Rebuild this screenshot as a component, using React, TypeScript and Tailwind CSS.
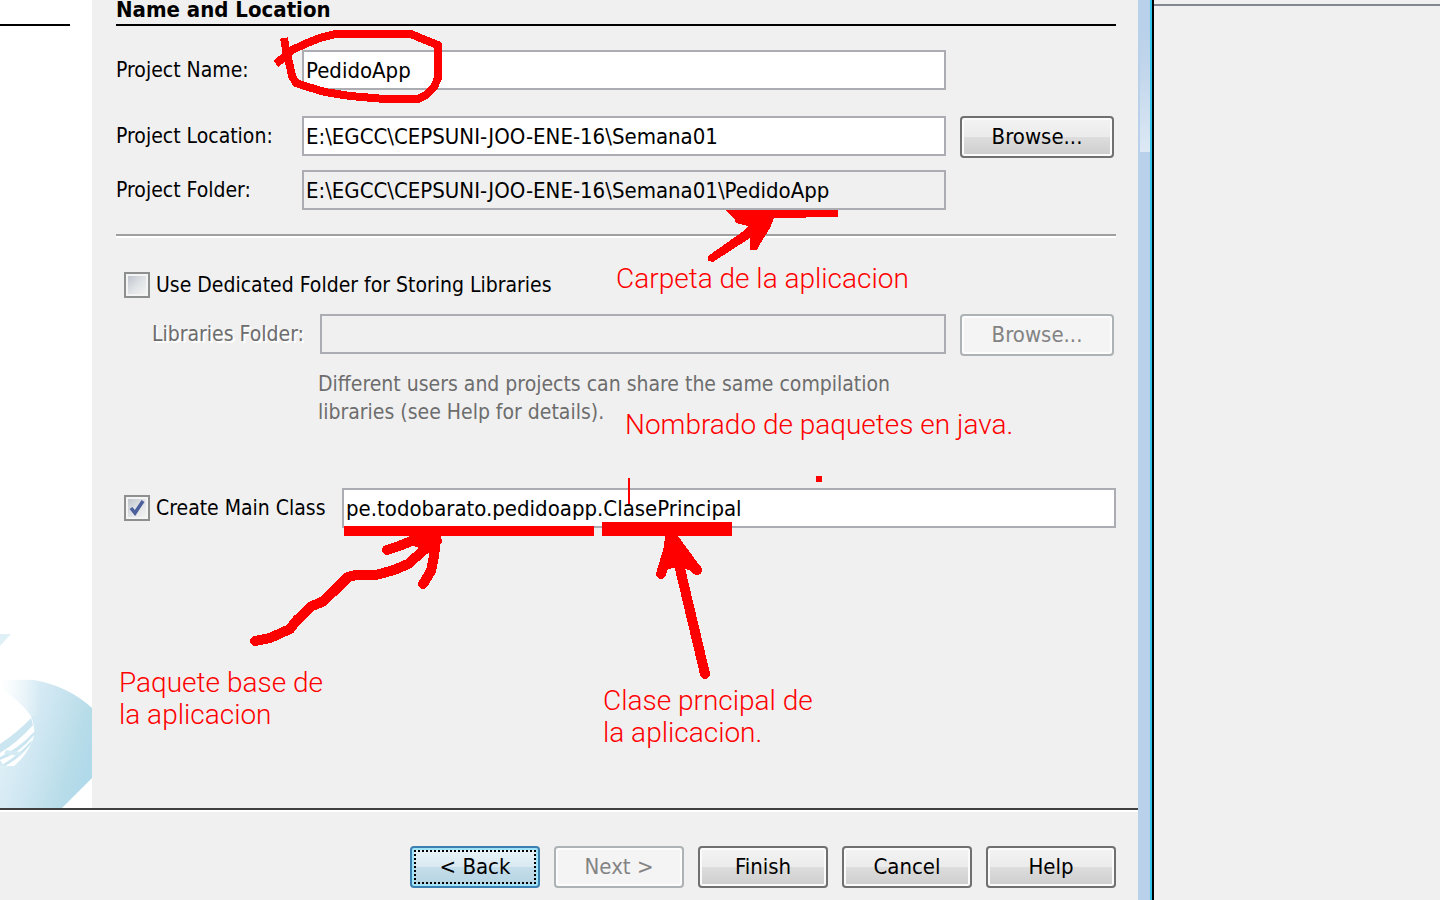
import type { ButtonHTMLAttributes, InputHTMLAttributes, ReactNode } from "react";
import clsx from "clsx";

const fieldBase =
  "h-10 w-full min-w-0 border-2 border-[#abadb3] px-0.5 text-[22px] leading-7 outline-none rounded-none";

function Field({ className, ...rest }: InputHTMLAttributes<HTMLInputElement>) {
  return <input type="text" className={clsx(fieldBase, className)} {...rest} />;
}

type Tone = "normal" | "focused" | "disabled";

function PushButton({
  tone = "normal",
  className,
  children,
  ...rest
}: ButtonHTMLAttributes<HTMLButtonElement> & { tone?: Tone }) {
  return (
    <button
      type="button"
      disabled={tone === "disabled"}
      className={clsx(
        "relative h-[42px] shrink-0 rounded-[4px] border-2 text-center text-[22px] leading-7",
        tone === "normal" &&
          "border-[#707070] bg-[linear-gradient(#f3f3f3,#ebebeb_50%,#dddddd_50%,#cdcdcd)] shadow-[inset_0_0_0_2px_#fbfbfb]",
        tone === "focused" &&
          "border-[#3c7fb1] bg-[linear-gradient(#eaf4f9,#d9e9f1_50%,#c5deea_50%,#b4d3e2)] shadow-[inset_0_0_0_2px_#9fe4f8]",
        tone === "disabled" &&
          "border-[#adb2b5] bg-[#f4f4f4] text-[#838383] shadow-[inset_0_0_0_2px_#fcfcfc]",
        className,
      )}
      {...rest}
    >
      {tone === "focused" && (
        <span className="absolute inset-0.5 border-2 border-dotted border-black" />
      )}
      {children}
    </button>
  );
}

function Tick({ id, checked }: { id: string; checked?: boolean }) {
  return (
    <span className="relative h-[26px] w-[26px] shrink-0">
      <input
        id={id}
        type="checkbox"
        defaultChecked={checked}
        className="peer block h-[26px] w-[26px] appearance-none border-2 border-[#8e8f8f] bg-[linear-gradient(135deg,#b8bec8,#dfe2e5_50%,#f6f6f6)] shadow-[inset_0_0_0_2px_#f4f4f4]"
      />
      <svg
        viewBox="0 0 26 26"
        className="pointer-events-none absolute inset-0 hidden h-full w-full peer-checked:block"
        aria-hidden="true"
      >
        <path d="M7 13 L11 18 L19 6" fill="none" stroke="#4b5f9b" strokeWidth="3.5" />
      </svg>
    </span>
  );
}

function Note({ className, children }: { className: string; children: ReactNode }) {
  return (
    <p
      className={clsx(
        "absolute whitespace-nowrap font-['Roboto','Liberation_Sans',sans-serif] text-[28px] font-light leading-8 text-[#ff0000]",
        className,
      )}
    >
      {children}
    </p>
  );
}

function Swoosh() {
  return (
    <svg viewBox="0 0 92 176" className="h-44 w-full" aria-hidden="true">
      <defs>
        <linearGradient id="band" x1="0" y1="0.2" x2="1" y2="0.6">
          <stop offset="0" stopColor="#e6f3f8" />
          <stop offset="0.45" stopColor="#cfe7f2" />
          <stop offset="0.8" stopColor="#b9dde9" />
          <stop offset="1" stopColor="#b0d9ea" />
        </linearGradient>
        <linearGradient id="crest" x1="0" y1="0" x2="1" y2="0">
          <stop offset="0" stopColor="#ffffff" />
          <stop offset="1" stopColor="#ffffff" stopOpacity="0" />
        </linearGradient>
      </defs>
      <path d="M0 2 H11 L0 14 Z" fill="#e0f0f7" />
      <path d="M0 49 Q20 47 34 48 Q68 54 92 76 V146 L62 176 H0 Z" fill="url(#band)" />
      <path d="M0 47 H40 V84 H0 Z" fill="url(#crest)" />
      <path d="M0 57 Q20 68 31 84 Q37 98 32 110 Q26 124 14 134 H0 Z" fill="#ffffff" />
      <path d="M0 112 Q18 100 31 86 L33 93 Q18 110 0 121 Z" fill="#cbe6f1" />
      <path d="M0 125 Q18 117 34 100 L34 103 Q20 121 0 128 Z" fill="#cbe6f1" />
      <path d="M2 133 Q20 122 32 108 L31 112 Q20 126 5 134 Z" fill="#cbe6f1" />
      <path d="M6 118 L22 120 L20 124 L4 122 Z" fill="#d5ebf4" />
      <path d="M0 128 L4 134 H0 Z" fill="#d5ebf4" />
    </svg>
  );
}

function Ink() {
  return (
    <svg
      viewBox="0 0 1138 900"
      width="1138"
      height="900"
      className="absolute left-0 top-0"
      shapeRendering="crispEdges"
      fill="none"
      stroke="#ff0000"
      strokeWidth="8"
      strokeLinejoin="round"
      aria-hidden="true"
    >
      <path d="M276 64 L292 50 L305 44 L320 38 L335 34 H411 L425 40 L438 45 V78 L434 87 L426 95 L418 99 H385 L350 96 L325 92 L308 87 L296 83 L292 76 L289 62 L286 50 L284 38" />
      <path
        d="M725 210 H838 V217 L774 218 L770 228 L760 244 L757 250 H750 V238 L713 262 L708 261 V256 L745 230 L748 226 L736 223 L734 218 Z"
        fill="#ff0000"
        stroke="none"
      />
      <path
        d="M255 641 L270 638 L290 629 L297 620 L312 606 L322 602 L333 592 L348 577 L356 575 H376 L394 570 L408 564 L424 550 L437 541"
        strokeWidth="10"
        strokeLinecap="round"
      />
      <path
        d="M387 550 L399 546 L414 540 L436 538 L434 556 L431 571 L423 584 M414 541 L430 546"
        strokeWidth="10"
        strokeLinecap="round"
      />
      <g fill="#ff0000" stroke="none">
        <rect x="344" y="526" width="250" height="10" />
        <rect x="602" y="522" width="130" height="14" />
        <rect x="628" y="478" width="2" height="26" />
        <rect x="816" y="476" width="6" height="6" />
        <path d="M665 536 H678 L700 566 L688 570 L681 567 L674 568 L668 569 L662 566 Z" />
      </g>
      <path
        d="M705 674 L677 556 L671 541 L661 574 M673 541 L686 559 L697 570"
        strokeWidth="10"
        strokeLinecap="round"
      />
    </svg>
  );
}

export default function App() {
  return (
    <div className="flex min-h-screen bg-[#f0f0f0] font-['DejaVu_Sans_Condensed','DejaVu_Sans',sans-serif] text-[21px] leading-7 text-black">
      <div className="relative flex min-w-0 flex-1 flex-col">
        <div className="flex flex-1">
          <aside className="flex w-[92px] shrink-0 flex-col justify-between bg-white">
            <div className="mt-6 mr-[22px] h-0.5 bg-black" />
            <Swoosh />
          </aside>

          <main className="min-w-0 flex-1 pr-[22px] pl-6">
            <h1 className="h-[26px] border-b-2 border-black text-[22px] leading-5 font-bold">
              Name and Location
            </h1>

            <form id="project" className="pt-6">
              <div className="grid grid-cols-[186px_minmax(0,1fr)_170px] items-center">
                <label htmlFor="name">Project Name:</label>
                <Field id="name" defaultValue="PedidoApp" className="bg-white" />
              </div>

              <div className="mt-[26px] grid grid-cols-[186px_minmax(0,1fr)_170px] items-start">
                <label htmlFor="location" className="pt-1.5">
                  Project Location:
                </label>
                <Field
                  id="location"
                  defaultValue="E:\EGCC\CEPSUNI-JOO-ENE-16\Semana01"
                  className="bg-white"
                />
                <PushButton className="mr-0.5 ml-3.5">Browse...</PushButton>
              </div>

              <div className="mt-3 grid grid-cols-[186px_minmax(0,1fr)_170px] items-center">
                <label htmlFor="folder">Project Folder:</label>
                <Field
                  id="folder"
                  readOnly
                  defaultValue="E:\EGCC\CEPSUNI-JOO-ENE-16\Semana01\PedidoApp"
                  className="bg-[#f0f0f0]"
                />
              </div>

              <div className="mt-6 h-1 border-t-2 border-[#a0a0a0] bg-white" />

              <div className="mt-[33px] flex items-center gap-1.5 pl-2">
                <Tick id="dedicated" />
                <label htmlFor="dedicated">Use Dedicated Folder for Storing Libraries</label>
              </div>

              <div className="mt-[15px] grid grid-cols-[204px_minmax(0,1fr)_170px] items-start">
                <label
                  htmlFor="libraries"
                  className="pt-1.5 pl-9 text-[#6d6d6d] [text-shadow:2px_2px_0_#fff]"
                >
                  Libraries Folder:
                </label>
                <Field id="libraries" disabled className="bg-[#f0f0f0]" />
                <PushButton tone="disabled" className="mr-0.5 ml-3.5">
                  Browse...
                </PushButton>
              </div>

              <p className="mt-3.5 ml-[202px] max-w-[600px] text-[#6d6d6d]">
                Different users and projects can share the same compilation
                <br />
                libraries (see Help for details).
              </p>

              <div className="mt-[62px] flex items-center pl-2">
                <Tick id="create" checked />
                <label htmlFor="create" className="w-48 shrink-0 pl-1.5">
                  Create Main Class
                </label>
                <Field
                  aria-label="Main class name"
                  defaultValue="pe.todobarato.pedidoapp.ClasePrincipal"
                  className="bg-white"
                />
              </div>
            </form>
          </main>
        </div>

        <footer className="flex h-[92px] shrink-0 items-start justify-end gap-3.5 border-t-2 border-[#404040] pt-9 pr-[22px] shadow-[inset_0_2px_0_#fff]">
          <PushButton tone="focused" className="w-[130px]">
            &lt; Back
          </PushButton>
          <PushButton tone="disabled" className="w-[130px]">
            Next &gt;
          </PushButton>
          <PushButton className="w-[130px]">Finish</PushButton>
          <PushButton className="w-[130px]">Cancel</PushButton>
          <PushButton className="w-[130px]">Help</PushButton>
        </footer>

        <div className="pointer-events-none absolute inset-0">
          <Ink />
          <Note className="top-[263px] left-[616px]">Carpeta de la aplicacion</Note>
          <Note className="top-[409px] left-[625px]">Nombrado de paquetes en java.</Note>
          <Note className="top-[667px] left-[119px]">
            Paquete base de
            <br />
            la aplicacion
          </Note>
          <Note className="top-[685px] left-[603px]">
            Clase prncipal de
            <br />
            la aplicacion.
          </Note>
        </div>
      </div>

      <div className="w-4 shrink-0 border-r-2 border-black bg-[#b9d1ea]">
        <div className="flex h-full flex-col border-r-2 border-[#35c5ea] pl-0.5">
          <div className="h-[152px] bg-[linear-gradient(#b9d1ea_20%,#c3d7ec_50%,#dde9f5)]" />
        </div>
      </div>
      <div className="w-[286px] shrink-0 pt-1">
        <div className="h-0.5 bg-[#828790]" />
      </div>
    </div>
  );
}
